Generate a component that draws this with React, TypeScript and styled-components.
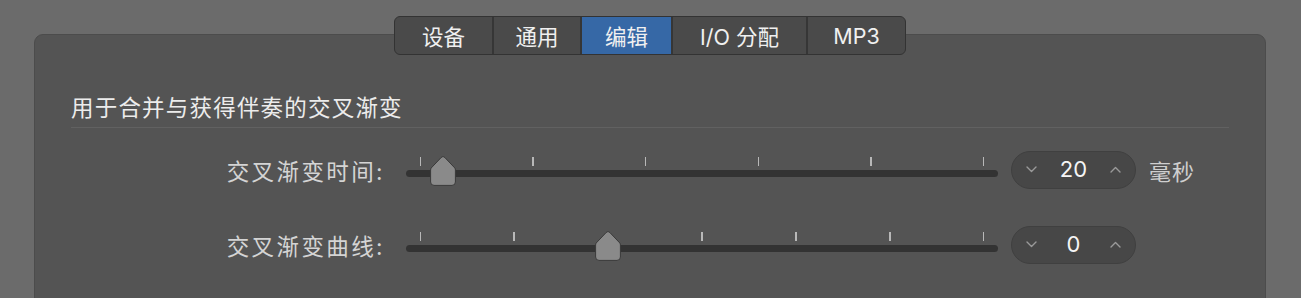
import React from 'react'
import styled, { createGlobalStyle } from 'styled-components'

const GlobalStyle = createGlobalStyle`
    html, body {
        margin: 0;
        padding: 0;
        background: #6b6b6b;
        overflow: hidden;
    }
    body {
        font-family: "Inter", "Noto Sans CJK SC", sans-serif;
    }
`

type Tab = { label: string; width: number }

const tabs: Tab[] = [
    { label: '设备', width: 97 },
    { label: '通用', width: 88 },
    { label: '编辑', width: 91 },
    { label: 'I/O 分配', width: 135 },
    { label: 'MP3', width: 99 },
]

type SliderRow = {
    label: string
    ticks: number
    fraction: number
    value: string
    unit?: string
}

const rows: SliderRow[] = [
    { label: '交叉渐变时间:', ticks: 6, fraction: 0.04, value: '20', unit: '毫秒' },
    { label: '交叉渐变曲线:', ticks: 7, fraction: 1 / 3, value: '0' },
]

const Chevron: React.FC<{ up?: boolean }> = ({ up }) => (
    <svg width="11" height="7" viewBox="0 0 11 7">
        <polyline
            points={up ? '1,6 5.5,1.5 10,6' : '1,1 5.5,5.5 10,1'}
            fill="none"
            stroke="#9a9a9a"
            strokeWidth="1.4"
            strokeLinecap="round"
            strokeLinejoin="round"
        />
    </svg>
)

const ThumbShape: React.FC = () => (
    <svg width="26" height="30" viewBox="0 0 26 30">
        <path
            d="M13 0.6 Q14 0.6 15 1.7 L24.8 12 Q25.4 12.8 25.4 14 L25.4 26 Q25.4 29.4 22 29.4 L4 29.4 Q0.6 29.4 0.6 26 L0.6 14 Q0.6 12.8 1.2 12 L11 1.7 Q12 0.6 13 0.6 Z"
            fill="#8a8a8a"
            stroke="#3a3a3a"
            strokeWidth="1"
        />
    </svg>
)

const App: React.FC = () => {
    return (
        <Page>
            <GlobalStyle />
            <TabBar>
                {tabs.map((t, i) => (
                    <TabButton key={t.label} $width={t.width} $active={i === 2}>
                        {t.label}
                    </TabButton>
                ))}
            </TabBar>
            <Panel>
                <Heading>用于合并与获得伴奏的交叉渐变</Heading>
                <Rows>
                    {rows.map(r => (
                        <Row key={r.label}>
                            <Label>{r.label}</Label>
                            <Slider>
                                <Ticks>
                                    {Array.from({ length: r.ticks }).map((_, i) => (
                                        <Tick key={i} />
                                    ))}
                                </Ticks>
                                <Track />
                                <Thumb
                                    style={{ left: `calc(14px + ${r.fraction} * (100% - 28px) - 13px)` }}
                                >
                                    <ThumbShape />
                                </Thumb>
                            </Slider>
                            <Stepper>
                                <Chevron />
                                <StepValue>{r.value}</StepValue>
                                <Chevron up />
                            </Stepper>
                            <Unit>{r.unit}</Unit>
                        </Row>
                    ))}
                </Rows>
            </Panel>
        </Page>
    )
}

const Page = styled.div`
    width: 1301px;
    height: 298px;
    box-sizing: border-box;
    padding: 16px 35px 0 34px;
    display: flex;
    flex-direction: column;
    align-items: stretch;
    background: #6b6b6b;
    overflow: hidden;
`
const TabBar = styled.div`
    position: relative;
    z-index: 1;
    flex-shrink: 0;
    align-self: center;
    display: flex;
    height: 39px;
    box-sizing: border-box;
    border: 1px solid #333333;
    border-radius: 6px;
    background: #4a4a4a;
    overflow: hidden;
`
const TabButton = styled.div<{ $width: number; $active?: boolean }>`
    width: ${p => p.$width}px;
    box-sizing: border-box;
    display: flex;
    align-items: center;
    justify-content: center;
    font-size: 21.5px;
    font-weight: 400;
    color: #f0f0f0;
    background: ${p => (p.$active ? '#3668a6' : 'transparent')};
    & + & {
        border-left: 2px solid #363636;
    }
`
const Panel = styled.div`
    flex-shrink: 0;
    margin-top: -21px;
    height: 320px;
    box-sizing: border-box;
    padding: 58px 36px 0 36px;
    background: #545454;
    border: 1px solid #4c4c4c;
    border-radius: 9px;
`
const Heading = styled.div`
    font-size: 22.5px;
    line-height: 30px;
    letter-spacing: 1.2px;
    color: #ececec;
    padding-bottom: 4px;
    border-bottom: 1.5px solid #616161;
`
const Rows = styled.div`
    margin-top: 23px;
    display: flex;
    flex-direction: column;
    gap: 37px;
`
const Row = styled.div`
    display: grid;
    grid-template-columns: 322px 592px 125px auto;
    column-gap: 13px;
    align-items: center;
    height: 38px;
`
const Label = styled.div`
    font-size: 22.5px;
    letter-spacing: 2.4px;
    color: #d4d4d4;
    text-align: right;
    padding-right: 8px;
    white-space: nowrap;
`
const Slider = styled.div`
    position: relative;
    height: 38px;
`
const Ticks = styled.div`
    display: flex;
    justify-content: space-between;
    padding: 6px 13.5px 0 13.5px;
`
const Tick = styled.div`
    width: 1.5px;
    height: 9px;
    background: #b8b8b8;
`
const Track = styled.div`
    margin-top: 4px;
    height: 7px;
    border-radius: 4px;
    background: #333333;
`
const Thumb = styled.div`
    position: absolute;
    top: 5px;
    width: 26px;
    height: 30px;
    line-height: 0;
`
const Stepper = styled.div`
    height: 38px;
    box-sizing: border-box;
    display: flex;
    align-items: center;
    justify-content: space-between;
    padding: 0 14px 2px 14px;
    border-radius: 19px;
    background: #474747;
    border: 1px solid #404040;
`
const StepValue = styled.span`
    font-size: 22px;
    color: #f5f5f5;
`
const Unit = styled.span`
    font-size: 22px;
    letter-spacing: 1px;
    color: #cfcfcf;
`

export default App
